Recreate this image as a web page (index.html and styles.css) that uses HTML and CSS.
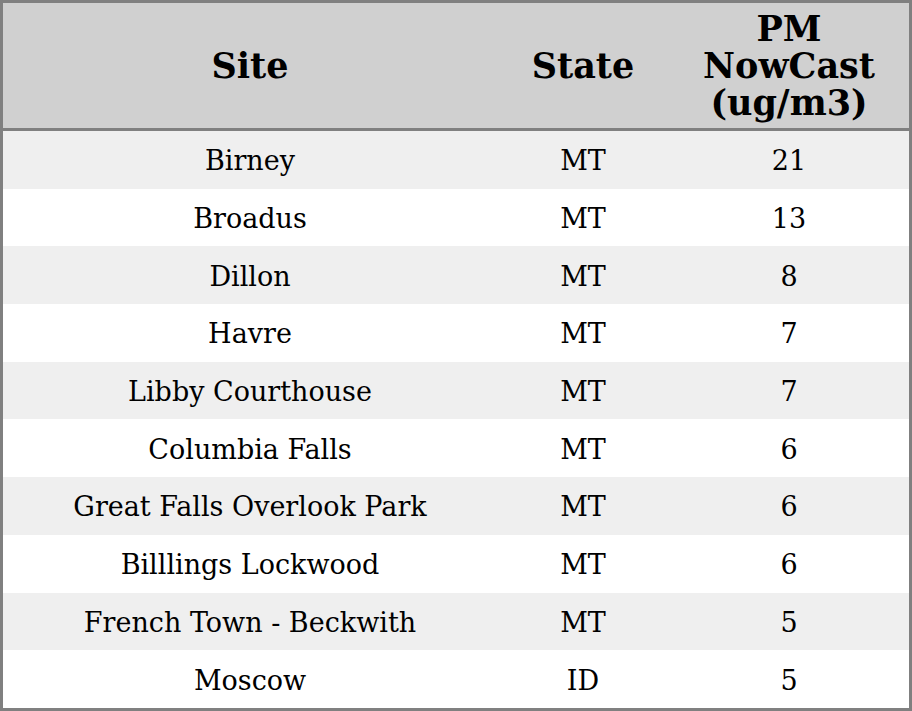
FILE: index.html
```html
<!DOCTYPE html>
<html>
<head>
<meta charset="utf-8">
<link rel="stylesheet" href="styles.css">
</head>
<body>
<table class="aq">
  <colgroup>
    <col class="c-site">
    <col class="c-state">
    <col class="c-pm">
  </colgroup>
  <thead>
    <tr><th>Site</th><th>State</th><th>PM<br>NowCast<br>(ug/m3)</th></tr>
  </thead>
  <tbody>
    <tr><td>Birney</td><td>MT</td><td>21</td></tr>
    <tr><td>Broadus</td><td>MT</td><td>13</td></tr>
    <tr><td>Dillon</td><td>MT</td><td>8</td></tr>
    <tr><td>Havre</td><td>MT</td><td>7</td></tr>
    <tr><td>Libby Courthouse</td><td>MT</td><td>7</td></tr>
    <tr><td>Columbia Falls</td><td>MT</td><td>6</td></tr>
    <tr><td>Great Falls Overlook Park</td><td>MT</td><td>6</td></tr>
    <tr><td>Billlings Lockwood</td><td>MT</td><td>6</td></tr>
    <tr><td>French Town - Beckwith</td><td>MT</td><td>5</td></tr>
    <tr><td>Moscow</td><td>ID</td><td>5</td></tr>
  </tbody>
</table>
</body>
</html>
```

FILE: styles.css
```css
html, body {
  margin: 0;
  padding: 0;
  background: #ffffff;
}
.aq {
  width: 912px;
  height: 711px;
  border-collapse: separate;
  border-spacing: 0;
  border: 3px solid #808080;
  box-sizing: border-box;
  font-family: "DejaVu Serif", serif;
  color: #000;
  table-layout: fixed;
}
.c-site { width: 494px; }
.c-state { width: 172px; }
.c-pm { width: 240px; }
.aq th {
  background: #d0d0d0;
  font-weight: bold;
  font-size: 35px;
  line-height: 37px;
  height: 125px;
  padding: 0;
  text-align: center;
  vertical-align: middle;
  border-bottom: 3px solid #808080;
}
.aq td {
  font-size: 27px;
  text-align: center;
  vertical-align: middle;
  padding: 2px 0 0;
  height: 57.7px;
  box-sizing: border-box;
}
.aq tbody tr:nth-child(odd) td {
  background: #efefef;
}
```
